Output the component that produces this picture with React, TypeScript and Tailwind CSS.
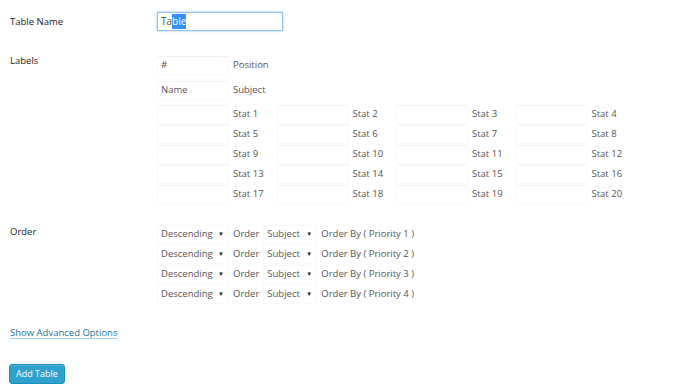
import React from 'react';

const inputCls =
  'h-[19px] w-[72px] border border-[#f9f9f9] border-t-[#f1f1f1] bg-white px-[3px] text-[9.5px] text-[#555] flex items-center';

function Box({ text }: { text?: string }) {
  return <div className={inputCls}>{text}</div>;
}

function Select({ text, width }: { text: string; width: string }) {
  return (
    <div className={`h-[19px] ${width} border border-[#f9f9f9] bg-white pl-[3px] pr-[4px] text-[9.5px] text-[#555] flex items-center justify-between`}>
      <span>{text}</span>
      <span className="text-[6px] text-[#222]">▼</span>
    </div>
  );
}

const stats = Array.from({ length: 20 }, (_, i) => i + 1);

export default function App() {
  return (
    <div className="w-[700px] h-[391px] bg-white px-[10px] pt-[12px] text-[#333] overflow-hidden" style={{ fontFamily: '"Open Sans", sans-serif' }}>
      <div className="flex">
        <div className="w-[147px] text-[9.5px] leading-[19px] text-[#222]">Table Name</div>
        <div className="h-[19px] w-[126px] border border-[#8fc2ec] shadow-[0_0_2px_rgba(30,140,190,0.5)] flex items-center px-[3px] text-[10px] text-[#555]">
          <span>Ta</span>
          <span className="bg-[#3390ff] text-white">ble</span>
        </div>
      </div>

      <div className="flex mt-[25px]">
        <div className="w-[147px] text-[9.5px] leading-[10px] text-[#222]">Labels</div>
        <div className="flex flex-col">
          <div className="flex items-center">
            <Box text="#" />
            <span className="ml-[4px] text-[9.5px] text-[#555]">Position</span>
          </div>
          <div className="flex items-center mt-[6px]">
            <Box text="Name" />
            <span className="ml-[4px] text-[9.5px] text-[#555]">Subject</span>
          </div>
          <div className="grid grid-cols-4 w-[478px] mt-[5px] gap-y-[1px]">
            {stats.map((n) => (
              <div key={n} className="flex items-center">
                <Box />
                <span className="ml-[4px] text-[9.5px] text-[#555]">Stat {n}</span>
              </div>
            ))}
          </div>
        </div>
      </div>

      <div className="flex mt-[21px]">
        <div className="w-[147px] text-[9.5px] leading-[14px] text-[#222]">Order</div>
        <div className="flex flex-col gap-[1px]">
          {[1, 2, 3, 4].map((p) => (
            <div key={p} className="flex items-center text-[9.5px] text-[#555]">
              <Select text="Descending" width="w-[72px]" />
              <span className="ml-[4px]">Order</span>
              <div className="ml-[4px]">
                <Select text="Subject" width="w-[54px]" />
              </div>
              <span className="ml-[4px]">Order By ( Priority {p} )</span>
            </div>
          ))}
        </div>
      </div>

      <div className="mt-[14px]">
        <a className="text-[9.5px] text-[#21759b] underline decoration-[#9fd3ef] underline-offset-2">Show Advanced Options</a>
      </div>

      <button className="mt-[22px] -ml-[1px] h-[20px] px-[6px] rounded-[3px] bg-[#2ea2cc] border border-[#1e8cbe] text-white text-[9px] shadow-[inset_0_1px_0_rgba(120,200,230,0.5)]">
        Add Table
      </button>
    </div>
  );
}
